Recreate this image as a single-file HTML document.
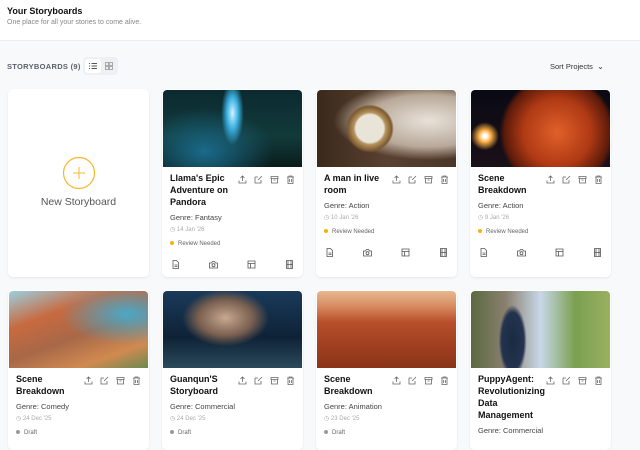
<!DOCTYPE html>
<html><head><meta charset="utf-8"><style>
*{box-sizing:border-box;margin:0;padding:0}
body{width:640px;height:433px;overflow:hidden;background:#f8f9fb;font-family:"Liberation Sans",sans-serif;position:relative}
.hdr{position:absolute;left:0;top:0;width:640px;height:41px;background:#fff;border-bottom:1px solid #eceef1}
.hdr h1{position:absolute;left:7px;top:6px;font-size:9px;font-weight:bold;color:#111}
.hdr p{position:absolute;left:7px;top:19px;font-size:7px;color:#888}
.lbl{position:absolute;left:7px;top:62px;font-size:7.5px;font-weight:bold;color:#5a5f6a;letter-spacing:.3px}
.tog{position:absolute;left:83px;top:57px;width:35px;height:18px;background:#eef0f3;border-radius:4px}
.tog .a{position:absolute;left:2px;top:2px;width:16px;height:14px;background:#fff;border-radius:3px}
.sort{position:absolute;left:550px;top:62px;font-size:7.5px;color:#333}
.card{position:absolute;width:141px;background:#fff;border-radius:5px;box-shadow:0 1px 2px rgba(0,0,0,.08);overflow:hidden}
.img{position:absolute;left:1px;top:1px;right:1px;height:77px;border-radius:4px 4px 0 0}
.body{position:absolute;left:8px;top:83px;right:8px}
.t{font-size:9px;font-weight:bold;color:#111;line-height:12px;width:64px}
.ic{position:absolute;top:3px;right:0;display:flex;gap:7px}
.ic svg,.bi svg{width:9px;height:9px}
.g{font-size:7.5px;color:#444;margin-top:4px;line-height:12px}
.d{font-size:6px;color:#aaa;line-height:12px}
.s{font-size:6px;color:#666;line-height:12px;margin-top:2px}
.s i{display:inline-block;width:4px;height:4px;border-radius:50%;background:#f5b400;margin-right:4px;vertical-align:middle}
.s i.gr{background:#999}
.bi{display:flex;justify-content:space-between;margin-top:10px;padding:0 1px}
</style></head><body>
<div class="hdr"><h1>Your Storyboards</h1><p>One place for all your stories to come alive.</p></div>
<div class="lbl">STORYBOARDS (9)</div>
<div class="tog"><div class="a"></div>
<svg style="position:absolute;left:6px;top:5px" width="8" height="8" viewBox="0 0 8 8" stroke="#555" stroke-width=".9"><path d="M0 1.5h1M2.5 1.5H8M0 4h1M2.5 4H8M0 6.5h1M2.5 6.5H8"/></svg>
<svg style="position:absolute;left:22px;top:5px" width="8" height="8" viewBox="0 0 8 8" stroke="#999" fill="none" stroke-width=".8"><rect x=".5" y=".5" width="3" height="3"/><rect x="4.5" y=".5" width="3" height="3"/><rect x=".5" y="4.5" width="3" height="3"/><rect x="4.5" y="4.5" width="3" height="3"/></svg></div>
<div class="sort">Sort Projects &nbsp;<span style="font-size:8px">⌄</span></div>

<div class="card" style="left:8px;top:89px;height:188px">
<svg style="position:absolute;left:54px;top:67px" width="34" height="34"><circle cx="17" cy="17" r="15.5" fill="none" stroke="#f5b82e" stroke-width="1.2"/><path d="M17 11v12M11 17h12" stroke="#f5b82e" stroke-width="1"/></svg>
<div style="position:absolute;left:0;right:0;top:107px;text-align:center;font-size:10.5px;color:#555">New Storyboard</div></div>

<svg width="0" height="0" style="position:absolute"><defs>
<g id="i1"><path d="M4.5 1v5M2.5 3l2-2 2 2M1 5.5V8h7V5.5" fill="none" stroke="#666" stroke-width=".8"/></g>
<g id="i2"><path d="M1 2h3M1 2v6h6V5M4 5l4-4" fill="none" stroke="#666" stroke-width=".8"/></g>
<g id="i3"><path d="M1 1.5h7v2H1zM1.5 3.5V8h6V3.5M3.5 5h2" fill="none" stroke="#666" stroke-width=".8"/></g>
<g id="i4"><path d="M1 2h7M3 2V1h3v1M2 2v6.5h5V2M3.5 4v3M5.5 4v3" fill="none" stroke="#666" stroke-width=".8"/></g>
<g id="b1"><path d="M2 .5h3.5L7.5 2.5v6H2zM3.5 5h3M3.5 6.5h3" fill="none" stroke="#555" stroke-width=".8"/></g>
<g id="b2"><path d="M.5 3h2l1-1.5h2l1 1.5h2v5H.5z" fill="none" stroke="#555" stroke-width=".8"/><circle cx="4.5" cy="5.2" r="1.5" fill="none" stroke="#555" stroke-width=".8"/></g>
<g id="b3"><path d="M1 1h7v7H1zM1 3.5h7M3.5 3.5V8" fill="none" stroke="#555" stroke-width=".8"/></g>
<g id="b4"><path d="M1.5 .5h6v8h-6zM1.5 4.5h6M3 .5v8M6 .5v8" fill="none" stroke="#555" stroke-width=".8"/></g>
</defs></svg>

<div class="card" style="left:162px;top:89px;height:188px"><div class="img" style="background:radial-gradient(ellipse 14px 40px at 50% 30%,#cff4ff,#3ab0e0 40%,transparent 80%),radial-gradient(ellipse at 30% 80%,#1a6a8a,transparent 50%),linear-gradient(#0b2a30,#123a3a 60%,#0a1c1c)"></div>
<div class="body"><div class="t">Llama's Epic Adventure on Pandora</div>
<div class="ic"><svg><use href="#i1"/></svg><svg><use href="#i2"/></svg><svg><use href="#i3"/></svg><svg><use href="#i4"/></svg></div>
<div class="g">Genre: Fantasy</div><div class="d">◷ 14 Jan '26</div><div class="s"><i></i>Review Needed</div>
<div class="bi"><svg><use href="#b1"/></svg><svg><use href="#b2"/></svg><svg><use href="#b3"/></svg><svg><use href="#b4"/></svg></div></div></div>

<div class="card" style="left:316px;top:89px;height:188px"><div class="img" style="background:radial-gradient(circle at 38% 50%,#e8e4d8 14px,#b89460 16px,#7a5a30 22px,transparent 24px),radial-gradient(ellipse at 80% 40%,#e8e2da,#b8a898 40%,transparent 60%),linear-gradient(90deg,#3a2a1c,#5a4030 50%,#4a3628)"></div>
<div class="body"><div class="t">A man in live room</div>
<div class="ic"><svg><use href="#i1"/></svg><svg><use href="#i2"/></svg><svg><use href="#i3"/></svg><svg><use href="#i4"/></svg></div>
<div class="g">Genre: Action</div><div class="d">◷ 10 Jan '26</div><div class="s"><i></i>Review Needed</div>
<div class="bi"><svg><use href="#b1"/></svg><svg><use href="#b2"/></svg><svg><use href="#b3"/></svg><svg><use href="#b4"/></svg></div></div></div>

<div class="card" style="left:470px;top:89px;height:188px"><div class="img" style="background:radial-gradient(circle at 10% 60%,#fff 2px,#ffb040 6px,transparent 14px),radial-gradient(circle at 62% 55%,#e0602a,#b03a14 35%,#5a1a0a 55%,transparent 60%),linear-gradient(#0a0a14,#1a1018)"></div>
<div class="body"><div class="t">Scene Breakdown</div>
<div class="ic"><svg><use href="#i1"/></svg><svg><use href="#i2"/></svg><svg><use href="#i3"/></svg><svg><use href="#i4"/></svg></div>
<div class="g">Genre: Action</div><div class="d">◷ 9 Jan '26</div><div class="s"><i></i>Review Needed</div>
<div class="bi"><svg><use href="#b1"/></svg><svg><use href="#b2"/></svg><svg><use href="#b3"/></svg><svg><use href="#b4"/></svg></div></div></div>

<div class="card" style="left:8px;top:290px;height:160px"><div class="img" style="background:radial-gradient(ellipse at 85% 30%,#4aa8c8,transparent 40%),linear-gradient(160deg,#9ad0e0 0%,#c86a40 30%,#a86848 55%,#d08a50 80%,#6a8a50)"></div>
<div class="body"><div class="t">Scene Breakdown</div>
<div class="ic"><svg><use href="#i1"/></svg><svg><use href="#i2"/></svg><svg><use href="#i3"/></svg><svg><use href="#i4"/></svg></div>
<div class="g">Genre: Comedy</div><div class="d">◷ 24 Dec '25</div><div class="s"><i class="gr"></i>Draft</div></div></div>

<div class="card" style="left:162px;top:290px;height:160px"><div class="img" style="background:radial-gradient(ellipse at 45% 35%,#c8a890,#7a6050 25%,transparent 40%),linear-gradient(#1a3a5a,#0e2236 60%,#2a4a5a)"></div>
<div class="body"><div class="t">Guanqun'S Storyboard</div>
<div class="ic"><svg><use href="#i1"/></svg><svg><use href="#i2"/></svg><svg><use href="#i3"/></svg><svg><use href="#i4"/></svg></div>
<div class="g">Genre: Commercial</div><div class="d">◷ 24 Dec '25</div><div class="s"><i class="gr"></i>Draft</div></div></div>

<div class="card" style="left:316px;top:290px;height:160px"><div class="img" style="background:linear-gradient(#e8b890,#d88a60 20%,#b8502a 40%,#a04020 70%,#8a3418)"></div>
<div class="body"><div class="t">Scene Breakdown</div>
<div class="ic"><svg><use href="#i1"/></svg><svg><use href="#i2"/></svg><svg><use href="#i3"/></svg><svg><use href="#i4"/></svg></div>
<div class="g">Genre: Animation</div><div class="d">◷ 23 Dec '25</div><div class="s"><i class="gr"></i>Draft</div></div></div>

<div class="card" style="left:470px;top:290px;height:160px"><div class="img" style="background:radial-gradient(ellipse 14px 36px at 30% 65%,#1a2a40,#243450 80%,transparent),linear-gradient(90deg,#5a6a40,#8a8070 25%,#c8d8e8 50%,#7aa050 75%,#9ab060)"></div>
<div class="body"><div class="t">PuppyAgent: Revolutionizing Data Management</div>
<div class="ic"><svg><use href="#i1"/></svg><svg><use href="#i2"/></svg><svg><use href="#i3"/></svg><svg><use href="#i4"/></svg></div>
<div class="g">Genre: Commercial</div></div></div>
</body></html>
